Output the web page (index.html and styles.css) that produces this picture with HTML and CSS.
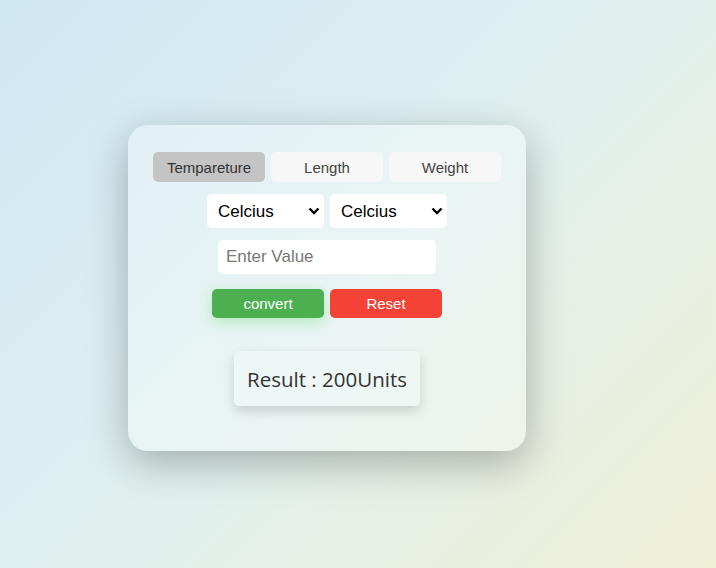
FILE: index.html
```html
<!DOCTYPE html>
<html>
<head>
<meta charset="utf-8">
<link rel="stylesheet" href="styles.css">
</head>
<body>
<div class="card">
  <div class="tabs">
    <button class="tab active">Tempareture</button>
    <button class="tab">Length</button>
    <button class="tab">Weight</button>
  </div>
  <div class="selects">
    <select class="unit"><option>Celcius</option></select>
    <select class="unit"><option>Celcius</option></select>
  </div>
  <input class="value" type="text" placeholder="Enter Value">
  <div class="actions">
    <button class="btn convert">convert</button>
    <button class="btn reset">Reset</button>
  </div>
  <div class="result">Result : 200Units</div>
</div>
</body>
</html>
```
FILE: styles.css
```css
html, body {
  margin: 0;
  height: 100%;
}
body {
  background: linear-gradient(135deg, #cfe7f4 0%, #e0f0ef 50%, #efefd5 100%);
  font-family: "Liberation Sans", Arial, sans-serif;
  overflow: hidden;
}
.card {
  box-sizing: border-box;
  width: 398px;
  height: 326px;
  margin: 125px 0 0 128px;
  padding: 27px 25px 0;
  border-radius: 20px;
  background: rgba(255, 255, 255, 0.3);
  box-shadow: 0 12px 40px rgba(0, 0, 0, 0.28);
  display: flex;
  flex-direction: column;
  align-items: center;
}
.tabs {
  display: flex;
  gap: 6px;
}
.tab {
  width: 112px;
  height: 30px;
  border: none;
  border-radius: 5px;
  background: #f7f7f7;
  color: #444;
  font-family: "Liberation Sans", Arial, sans-serif;
  font-size: 15px;
  padding: 0;
}
.tab.active {
  background: #c4c4c4;
  color: #333;
}
.selects {
  display: flex;
  gap: 6px;
  margin-top: 12px;
}
.unit {
  -webkit-appearance: none;
  appearance: none;
  width: 117px;
  height: 34px;
  border: none;
  border-radius: 5px;
  background: #fff url("data:image/svg+xml,%3Csvg xmlns='http://www.w3.org/2000/svg' width='12' height='8' viewBox='0 0 12 8'%3E%3Cpath d='M1.5 1.5 L6 6 L10.5 1.5' fill='none' stroke='%23000' stroke-width='2.4'/%3E%3C/svg%3E") no-repeat right 4px center;
  color: #000;
  font-family: "Liberation Sans", Arial, sans-serif;
  font-size: 17px;
  padding: 0 0 0 11px;
}
.value {
  box-sizing: border-box;
  width: 218px;
  height: 34px;
  margin-top: 12px;
  border: none;
  border-radius: 5px;
  background: #fff;
  padding: 0 8px;
  font-family: "Liberation Sans", Arial, sans-serif;
  font-size: 17px;
  outline: none;
}
.value::placeholder {
  color: #777;
}
.actions {
  display: flex;
  gap: 6px;
  margin-top: 15px;
}
.btn {
  width: 112px;
  height: 29px;
  border: none;
  border-radius: 5px;
  color: #fff;
  font-family: "Liberation Sans", Arial, sans-serif;
  font-size: 15px;
  padding: 0;
}
.convert {
  background: #4caf50;
  box-shadow: 0 4px 14px rgba(76, 220, 80, 0.35);
}
.reset {
  background: #f44336;
}
.result {
  box-sizing: border-box;
  width: 186px;
  height: 55px;
  margin-top: 33px;
  border-radius: 5px;
  background: rgba(240, 250, 248, 0.55);
  box-shadow: 0 5px 12px rgba(0, 0, 0, 0.15);
  display: flex;
  align-items: center;
  justify-content: center;
  font-family: "Open Sans", "Noto Sans", sans-serif;
  font-size: 20.5px;
  color: #333;
}
```
